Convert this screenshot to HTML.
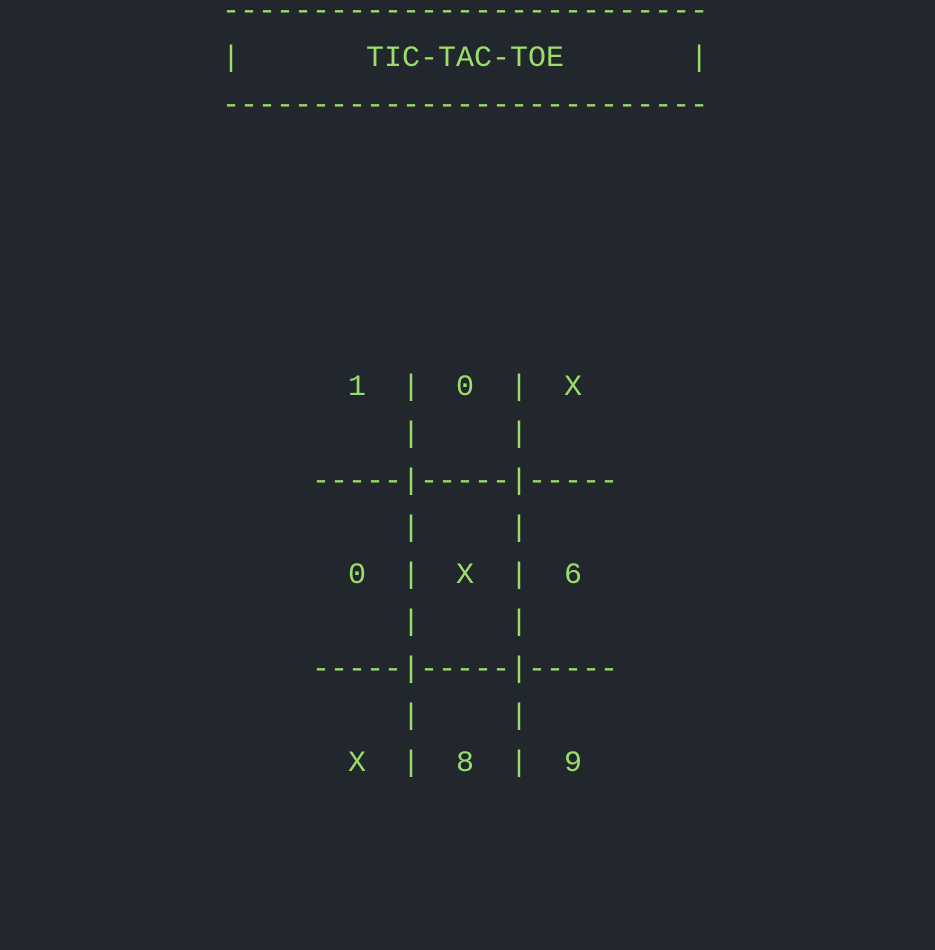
<!DOCTYPE html>
<html><head><meta charset="utf-8"><style>
html,body{margin:0;padding:0;background:#22262d;width:935px;height:950px;overflow:hidden}
pre{position:absolute;left:222px;top:-11px;margin:0;font-family:"Liberation Mono",monospace;font-size:30px;line-height:47px;color:#9ade6a}
</style></head><body>
<pre>---------------------------
|       TIC-TAC-TOE       |
---------------------------





       1  |  0  |  X
          |     |
     -----|-----|-----
          |     |
       0  |  X  |  6
          |     |
     -----|-----|-----
          |     |
       X  |  8  |  9</pre>
</body></html>
